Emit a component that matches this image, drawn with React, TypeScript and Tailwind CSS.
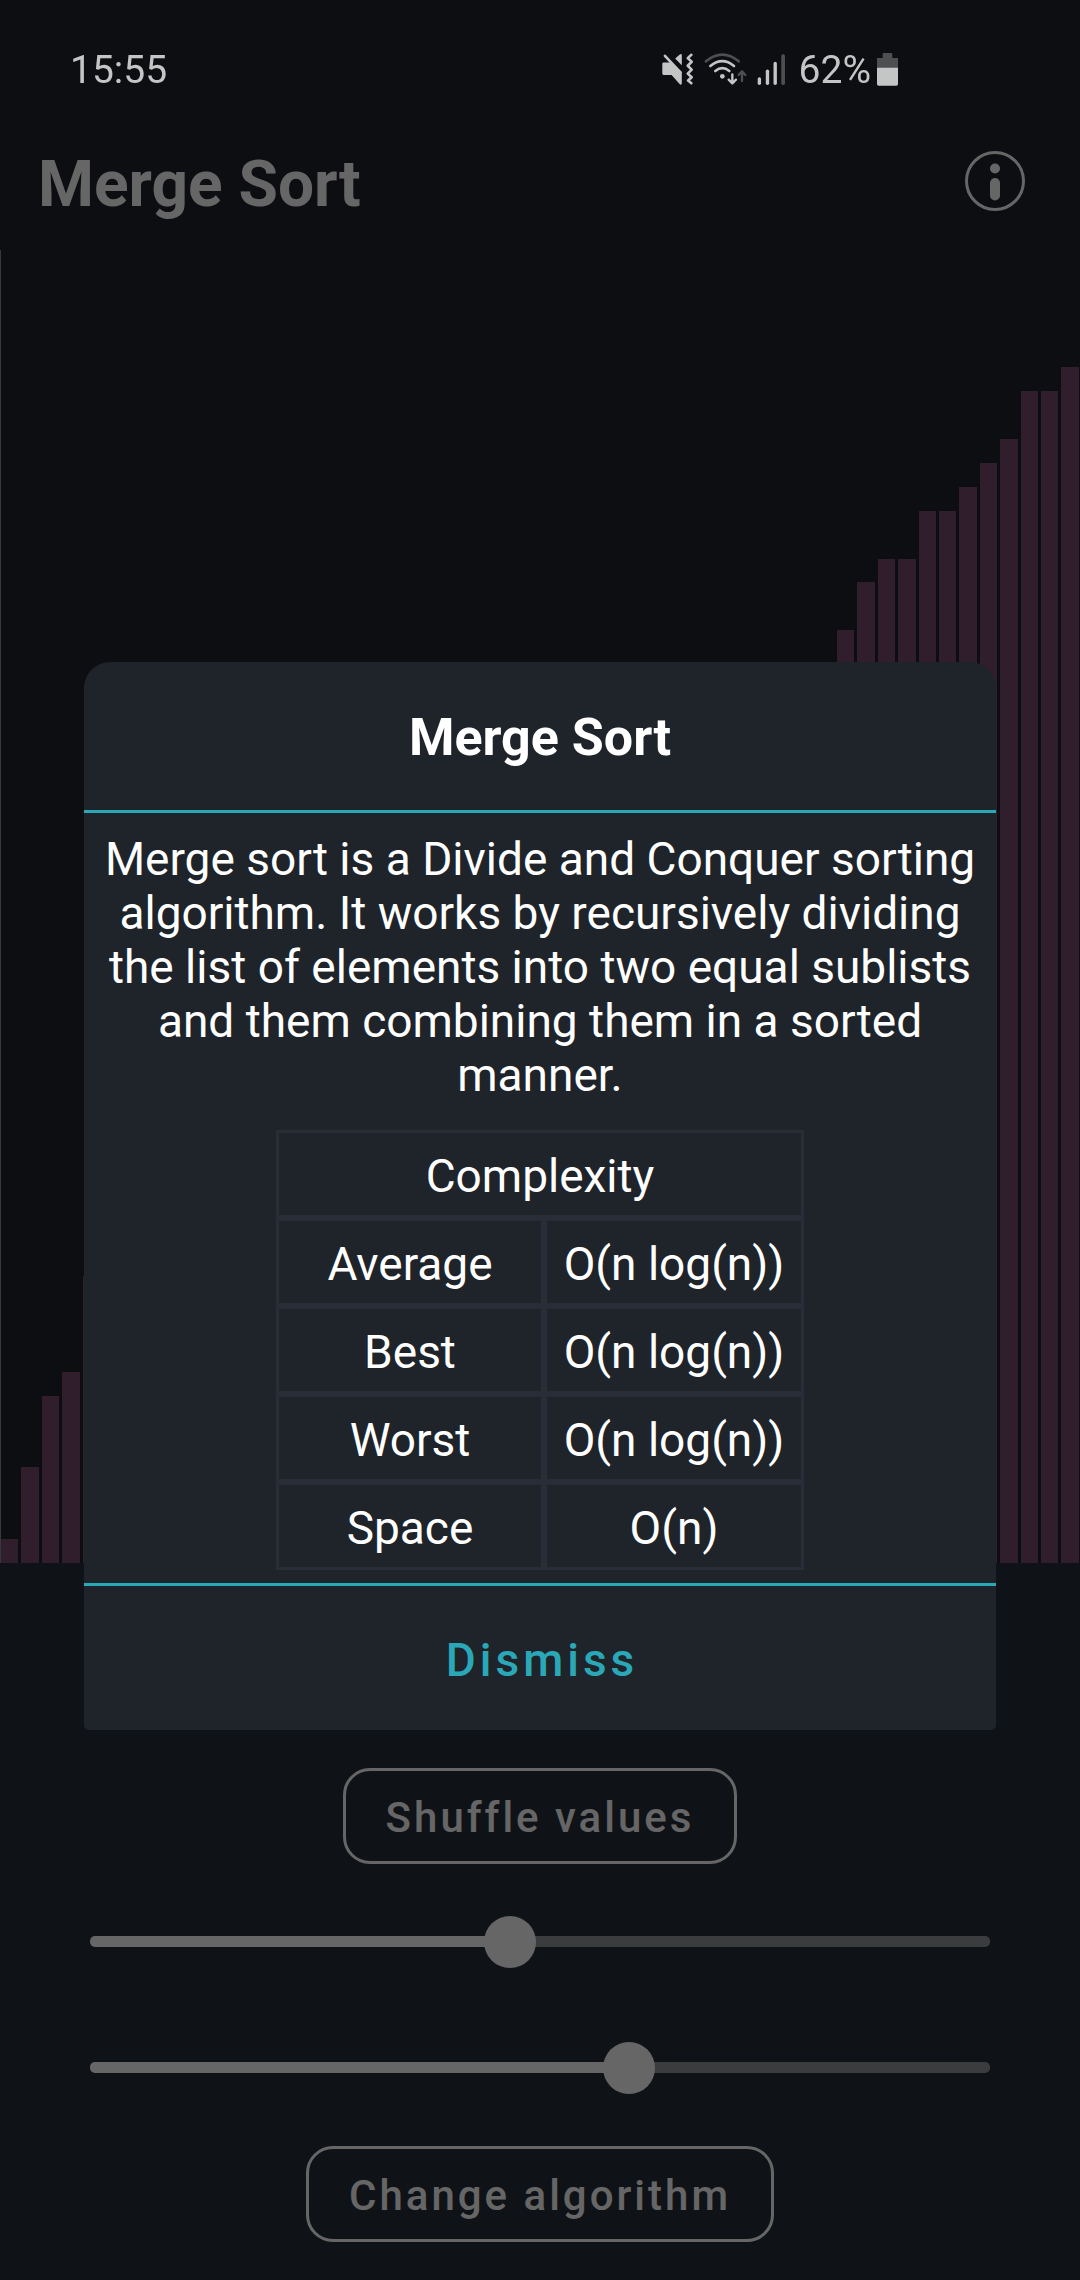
import { useState } from "react";

const VALUES = [
  1, 4, 7, 8, 12, 12, 13, 14, 14, 15, 16, 17, 17, 18, 19, 20, 20, 21, 22, 22,
  23, 24, 25, 25, 26, 27, 28, 28, 29, 30, 31, 32, 32, 33, 34, 34, 35, 36, 36,
  37, 37, 39, 41, 42, 42, 44, 44, 45, 46, 47, 49, 49, 50,
];
const CHART_MAX = 54.9;

const COMPLEXITY = [
  ["Average", "O(n log(n))"],
  ["Best", "O(n log(n))"],
  ["Worst", "O(n log(n))"],
  ["Space", "O(n)"],
];

function MuteVibrateIcon() {
  return (
    <svg viewBox="60 64 100 102" className="h-[34px] w-[33px]" aria-hidden="true">
      <g fill="#c4c6c6">
        <path d="M64 99q0-4 4-4h20l35 29v34q0 7-6 3L92 133H68q-4 0-4-4z" />
        <path d="M103 83l14-12q6-4 6 3v30z" />
      </g>
      <g fill="none" stroke="#c4c6c6" strokeWidth="8" strokeLinecap="round" strokeLinejoin="round">
        <path d="M72 75l47 50" />
        <path d="M152 72l-11 10 12 11-12 12 12 12-12 12 12 11-11 10 10 8" />
      </g>
    </svg>
  );
}

function WifiIcon() {
  return (
    <svg viewBox="192 62 132 102" className="h-[34px] w-[44px]" aria-hidden="true">
      <g fill="none" strokeWidth="8" strokeLinecap="round" strokeLinejoin="round">
        <path d="M198 90q49-40 98 0" stroke="#4d4f51" />
        <path d="M211 104q36-29 71 0M226 119q21-17 42 0" stroke="#c4c6c6" />
        <path d="M277 129v26M266 145l11 11 11-11" stroke="#c4c6c6" strokeWidth="7" />
        <path d="M306 149v-28M296 131l10-11 10 11" stroke="#4d4f51" strokeWidth="7" />
      </g>
      <circle cx="247" cy="135" r="7" fill="#c4c6c6" />
    </svg>
  );
}

function SignalIcon() {
  return (
    <svg viewBox="352 66 86 98" className="h-[33px] w-[29px]" aria-hidden="true">
      <g fill="#c4c6c6">
        <rect x="354" y="138" width="10" height="23" rx="5" />
        <rect x="378" y="115" width="10" height="46" rx="5" />
        <rect x="401" y="92" width="10" height="69" rx="5" />
      </g>
      <rect x="424" y="70" width="11" height="91" rx="5" fill="#4d4f51" />
    </svg>
  );
}

function BatteryIcon() {
  return (
    <svg viewBox="711 63 63 99" className="h-[33px] w-[21px]" aria-hidden="true">
      <path d="M731 63h22q4 0 4 4v11h17v30h-63V78h17V67q0-4 3-4z" fill="#4d4f51" />
      <path d="M711 107h63v49q0 5-5 5h-53q-5 0-5-5z" fill="#c4c6c6" />
    </svg>
  );
}

function StatusBar() {
  return (
    <div className="relative z-20 flex h-28 items-center justify-between pt-[26px] pr-[182px] pl-[70px] text-[39px] leading-none text-[#c4c6c6]">
      <span className="pt-[2px]">15:55</span>
      <div className="flex items-center">
        <MuteVibrateIcon />
        <span className="ml-[10px] flex"><WifiIcon /></span>
        <span className="ml-[9px] flex"><SignalIcon /></span>
        <span className="ml-[13px] pt-[2px]">62%</span>
        <span className="ml-[6px] flex"><BatteryIcon /></span>
      </div>
    </div>
  );
}

function Slider({ label, initial }: { label: string; initial: number }) {
  const [value, setValue] = useState(initial);
  const stop = `calc(26px + (100% - 52px) * ${value / 100})`;
  return (
    <input
      type="range"
      aria-label={label}
      min={0}
      max={100}
      step={0.5}
      value={value}
      onChange={(e) => setValue(Number(e.target.value))}
      style={{ ["--track" as string]: `linear-gradient(to right, #ffffff ${stop}, #949698 ${stop})` }}
      className="h-[51px] w-full appearance-none bg-transparent [&::-webkit-slider-runnable-track]:h-[11px] [&::-webkit-slider-runnable-track]:rounded-[5px] [&::-webkit-slider-runnable-track]:[background:var(--track)] [&::-webkit-slider-thumb]:-mt-5 [&::-webkit-slider-thumb]:size-[52px] [&::-webkit-slider-thumb]:appearance-none [&::-webkit-slider-thumb]:rounded-full [&::-webkit-slider-thumb]:bg-white"
    />
  );
}

function OutlineButton({ children }: { children: string }) {
  return (
    <button
      type="button"
      className="h-24 rounded-[27px] border-[3px] border-white px-10 pt-1 text-[42px] leading-none font-medium tracking-[3px] text-white"
    >
      {children}
    </button>
  );
}

function InfoDialog() {
  return (
    <div className="fixed inset-0 z-10 flex items-center justify-center bg-black/60 px-[84px] pt-28">
      <section
        role="dialog"
        aria-modal="true"
        aria-labelledby="dialog-title"
        className="w-full rounded-t-[26px] rounded-b-[5px] bg-[#1f242b] text-center text-white"
      >
        <header className="flex h-[151px] items-center justify-center border-b-[3px] border-[#2aa8b8] pt-1">
          <h2 id="dialog-title" className="text-[52px] leading-none font-bold">Merge Sort</h2>
        </header>
        <div className="px-5 pt-[19px] pb-[13px]">
          <p className="text-[46px] leading-[54px]">
            Merge sort is a Divide and Conquer sorting algorithm. It works by recursively dividing the
            list of elements into two equal sublists and them combining them in a sorted manner.
          </p>
          <table className="mx-auto mt-7 border-separate border-spacing-0 text-[46px] leading-[54px]">
            <thead>
              <tr>
                <th colSpan={2} className="h-[88px] border-[3px] border-[#2a2d38] p-0 pt-1 font-normal">
                  Complexity
                </th>
              </tr>
            </thead>
            <tbody>
              {COMPLEXITY.map(([name, cost]) => (
                <tr key={name}>
                  <th scope="row" className="h-[88px] w-[268px] border-[3px] border-[#2a2d38] p-0 pt-1 font-normal">
                    {name}
                  </th>
                  <td className="h-[88px] w-[260px] border-[3px] border-[#2a2d38] p-0 pt-1">{cost}</td>
                </tr>
              ))}
            </tbody>
          </table>
        </div>
        <footer className="border-t-[3px] border-[#2aa8b8]">
          <button
            type="button"
            className="h-36 w-full pt-1 pl-1 text-[46px] leading-none font-medium tracking-[4px] text-[#2aa8b8]"
          >
            Dismiss
          </button>
        </footer>
      </section>
    </div>
  );
}

export default function App() {
  return (
    <div className="flex min-h-screen flex-col bg-[#1f232b] font-[Roboto,sans-serif]">
      <StatusBar />
      <header className="flex h-[138px] items-center justify-between pr-[55px] pl-[38px] text-white">
        <h1 className="pt-2 text-[64px] leading-none font-bold">Merge Sort</h1>
        <button type="button" aria-label="About this algorithm">
          <svg viewBox="0 0 60 60" className="size-[60px]" aria-hidden="true">
            <circle cx="30" cy="30" r="28.5" fill="none" stroke="currentColor" strokeWidth="3" />
            <circle cx="30" cy="17.5" r="5" fill="currentColor" />
            <rect x="25" y="27" width="10" height="22.5" rx="5" fill="currentColor" />
          </svg>
        </button>
      </header>
      <main className="flex flex-1 flex-col">
        <div className="flex flex-1 gap-[3px] border-l border-[#8a8c90] pr-px">
          {VALUES.map((v, i) => (
            <div key={i} className="flex flex-1 flex-col justify-end">
              <div className="bg-[#784b6e]" style={{ height: `${(v / CHART_MAX) * 100}%` }} />
            </div>
          ))}
        </div>
        <div className="flex flex-col items-center gap-[52px] bg-[#272f3a] px-[90px] pt-[205px] pb-[38px]">
          <OutlineButton>Shuffle values</OutlineButton>
          <div className="flex w-full flex-col gap-[75px] pb-px">
            <Slider label="Number of values" initial={46.5} />
            <Slider label="Speed" initial={60.5} />
          </div>
          <OutlineButton>Change algorithm</OutlineButton>
        </div>
      </main>
      <InfoDialog />
    </div>
  );
}
